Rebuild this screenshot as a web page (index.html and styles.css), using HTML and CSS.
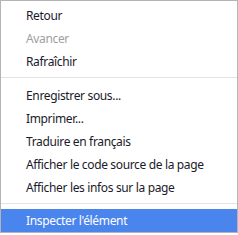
FILE: index.html
```html
<!DOCTYPE html>
<html lang="fr">
<head>
    <meta charset="UTF-8">
    <title>Menu contextuel</title>
    <link rel="stylesheet" href="styles.css">
</head>
<body>
    <ul class="menu">
        <li class="item">Retour</li>
        <li class="item disabled">Avancer</li>
        <li class="item">Rafraîchir</li>
        <li class="sep sep-first"></li>
        <li class="item">Enregistrer sous...</li>
        <li class="item">Imprimer...</li>
        <li class="item">Traduire en français</li>
        <li class="item">Afficher le code source de la page</li>
        <li class="item">Afficher les infos sur la page</li>
        <li class="sep"></li>
        <li class="item active">Inspecter l'élément</li>
    </ul>
</body>
</html>
```

FILE: styles.css
```css
body {
    margin: 0;
    background: #fff;
    font-family: "Segoe UI", "Noto Sans", "Open Sans", sans-serif;
}
.menu {
    list-style: none;
    margin: 0;
    padding: 3px 0 0 0;
    width: 236px;
    border: 1px solid #b4b4b4;
    background: #fff;
}
.item {
    height: 23px;
    line-height: 23px;
    padding-left: 25px;
    font-size: 12px;
    letter-spacing: -0.35px;
    color: #1a1a2a;
    white-space: nowrap;
}
.disabled {
    color: #a0a0a0;
}
.active {
    background-color: #4a84ed;
    color: #fff;
}
.sep {
    height: 1px;
    background: #e3e3e3;
    margin: 4px 0 5px;
}
.sep-first {
    margin-bottom: 6px;
}
```
